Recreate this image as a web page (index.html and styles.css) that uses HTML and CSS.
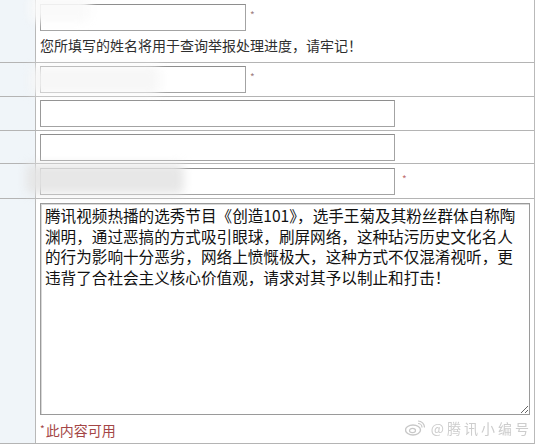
FILE: index.html
```html
<!DOCTYPE html>
<html lang="zh">
<head>
<meta charset="utf-8">
<title>举报表单</title>
<link rel="stylesheet" href="styles.css">
</head>
<body>
<div class="form">
  <div class="row r1">
    <div class="lab"></div>
    <div class="field col">
      <div class="line"><input class="inp short" type="text"><span class="req">*</span></div>
      <div class="hint">您所填写的姓名将用于查询举报处理进度，请牢记！</div>
    </div>
  </div>
  <div class="row r2">
    <div class="lab"></div>
    <div class="field"><input class="inp short" type="text"><span class="req">*</span></div>
  </div>
  <div class="row r3">
    <div class="lab"></div>
    <div class="field"><input class="inp long" type="text"></div>
  </div>
  <div class="row r4">
    <div class="lab"></div>
    <div class="field"><input class="inp long" type="text"></div>
  </div>
  <div class="row r5">
    <div class="lab"></div>
    <div class="field"><input class="inp long" type="text"><span class="req red">*</span></div>
  </div>
  <div class="row r6">
    <div class="lab"></div>
    <div class="field col">
      <textarea class="area" wrap="off">腾讯视频热播的选秀节目《创造101》，选手王菊及其粉丝群体自称陶
渊明，通过恶搞的方式吸引眼球，刷屏网络，这种玷污历史文化名人
的行为影响十分恶劣，网络上愤慨极大，这种方式不仅混淆视听，更
违背了合社会主义核心价值观，请求对其予以制止和打击！</textarea>
      <div class="note"><span class="star">*</span>此内容可用</div>
    </div>
  </div>

  <div class="blur b1"></div>
  <div class="blur b2"></div>
  <div class="blur b3"></div>
  <div class="mark">
    <svg class="wb" viewBox="0 0 20 16" width="20" height="16">
      <ellipse cx="8" cy="10" rx="7.5" ry="5" fill="none" stroke="#c8c8c8" stroke-width="1.4"/>
      <ellipse cx="7.5" cy="10.5" rx="3" ry="2.2" fill="none" stroke="#c8c8c8" stroke-width="1.2"/>
      <path d="M13 3.5a4 4 0 0 1 4 4M13 1a6.5 6.5 0 0 1 6.5 6.5" fill="none" stroke="#c8c8c8" stroke-width="1.2"/>
    </svg>
    <span>@腾讯小编号</span>
  </div>
</div>
</body>
</html>
```

FILE: styles.css
```css
* { box-sizing: border-box; }
body {
  margin: 0;
  background: #fff;
  font-family: "Noto Sans CJK SC", "Noto Sans", sans-serif;
  color: #333;
}
.form {
  position: relative;
  width: 535px;
  border-right: 1px solid #b9b9b9;
}
.row {
  display: grid;
  grid-template-columns: 36px 1fr;
  border-bottom: 1px solid #b4b4b4;
}
.lab {
  background: #f0f5f9;
  border-right: 1px solid #b8b8b8;
}
.field {
  display: flex;
  align-items: center;
  padding: 0 4px;
}
.field.col {
  flex-direction: column;
  align-items: flex-start;
}
.line {
  display: flex;
  align-items: center;
}
.r1 { height: 63px; }
.r1 .field { padding-top: 4px; }
.r2 { height: 34px; }
.r3 { height: 34px; }
.r4 { height: 33px; }
.r5 { height: 35px; }
.r6 { height: 245px; }
.r6 .field { padding-top: 4px; }

.inp {
  height: 27px;
  border: 1px solid #a3a3a3;
  border-top-color: #8e8e8e;
  border-left-color: #999;
  background: #fff;
  margin: 0;
  padding: 0 3px;
}
.short { width: 206px; }
.long { width: 355px; }
.req {
  font-size: 10px;
  color: #a08080;
  margin-left: 4px;
  margin-top: -6px;
}
.req.red { color: #c07070; margin-left: 7px; }
.hint {
  font-size: 14px;
  line-height: 18px;
  margin-top: 5px;
  color: #2e2e2e;
}
.area {
  width: 490px;
  height: 212px;
  margin: 0;
  border: 1px solid #9a9a9a;
  box-shadow: inset 1px 1px 0 #d8d8d8;
  padding: 1px 4px;
  font-family: "Noto Sans CJK SC", sans-serif;
  font-size: 15.6px;
  line-height: 20.5px;
  color: #111;
  overflow: hidden;
  resize: both;
  white-space: pre;
}
.note {
  font-size: 14px;
  line-height: 16px;
  margin-top: 6px;
  color: #a44646;
}
.note .star { font-size: 10px; vertical-align: 3px; margin-right: 1px; }

.blur {
  position: absolute;
  border-radius: 6px;
  filter: blur(5px);
}
.b1 { left: 30px; top: -6px; width: 60px; height: 28px; background: rgba(250, 250, 250, 0.9); }
.b2 { left: 30px; top: 66px; width: 130px; height: 28px; background: rgba(246, 246, 246, 0.85); }
.b3 { left: 26px; top: 164px; width: 158px; height: 30px; background: rgba(228, 228, 228, 0.9); }

.mark {
  position: absolute;
  right: 2px;
  bottom: 6px;
  display: flex;
  align-items: center;
  gap: 6px;
  color: #cdcdcd;
  font-size: 14px;
  letter-spacing: 3px;
  filter: blur(0.7px);
}
```
